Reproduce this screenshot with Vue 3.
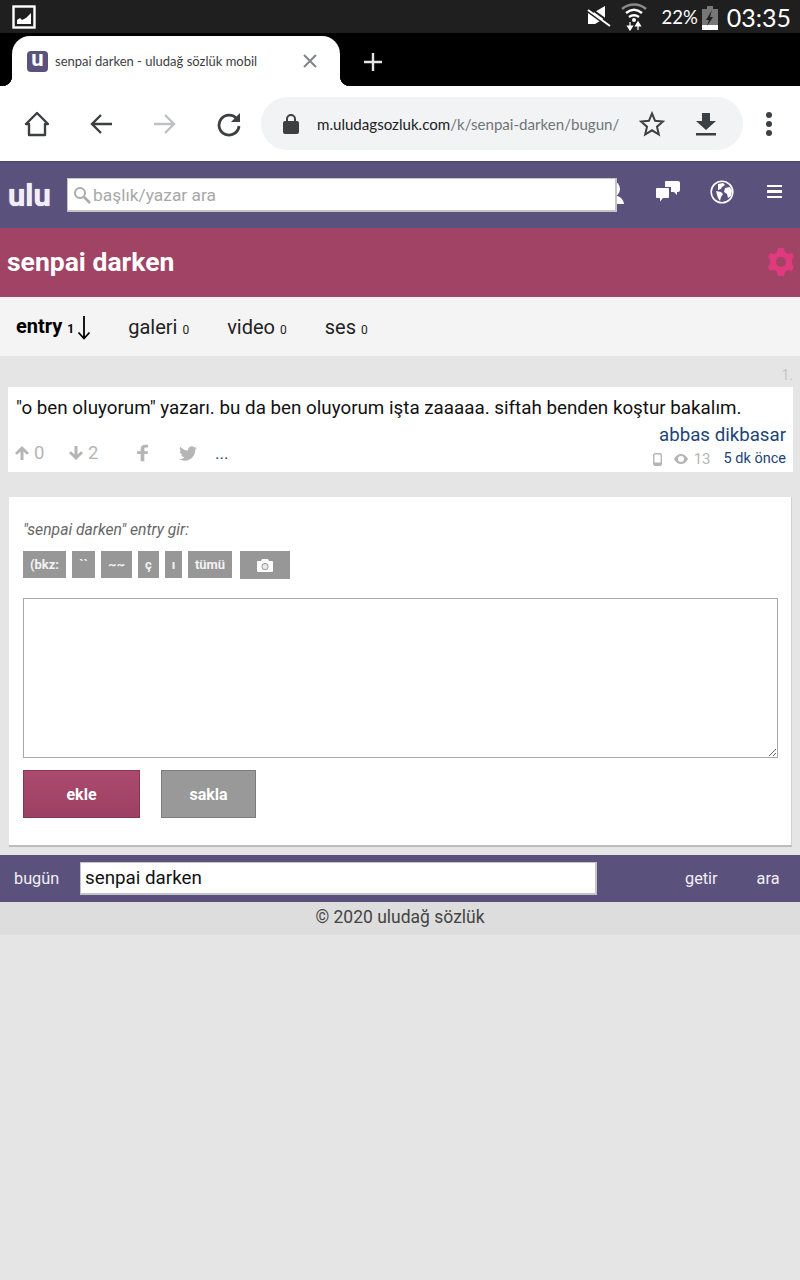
<template>
  <div class="page">
    <!-- android status bar -->
    <div class="status-bar">
      <svg class="pic-icon" width="24" height="24" viewBox="0 0 24 24">
        <rect x="1.5" y="1.5" width="21" height="21" fill="none" stroke="#fff" stroke-width="2.4" />
        <path d="M5 19v-4l3-2 2 2 4-2 5-5v11z" fill="#fff" />
      </svg>
      <div class="status-right">
        <svg width="24" height="24" viewBox="0 0 24 24">
          <path d="M1 8h5l12-7v12L8 19H1z" fill="#fff" />
          <path d="M0 6l22 16M3 3l22 16" stroke="#1f1f1f" stroke-width="2" />
          <path d="M1 5l22 16" stroke="#fff" stroke-width="2" />
        </svg>
        <svg class="wifi" width="26" height="28" viewBox="0 0 26 28">
          <path d="M1 6c7-6 17-6 24 0" fill="none" stroke="#8a8a8a" stroke-width="2.4" />
          <path d="M5 10c5-4 11-4 16 0M8 14c3-2 7-2 10 0" fill="none" stroke="#fff" stroke-width="2.4" />
          <circle cx="13" cy="17" r="2" fill="#fff" />
          <path d="M9 19v6M6.500 23h5l-2.500 4zM17 27v-6M14.500 23h5L17 19z" stroke="#fff" fill="#fff" stroke-width="1.200" />
        </svg>
        <span class="battery-text">22%</span>
        <svg class="battery" width="16" height="24" viewBox="0 0 16 24">
          <path d="M5 0h6v3h5v17H0V3h5z" fill="#777" />
          <rect y="19" width="16" height="5" fill="#fff" />
          <path d="M10 4L4 14h3l-2 6 6-9H8z" fill="#1f1f1f" />
        </svg>
        <span class="clock">03:35</span>
      </div>
    </div>

    <!-- browser tabs -->
    <div class="tab-strip">
      <div class="tab">
        <span class="favicon">u</span>
        <span class="tab-title">senpai darken - uludağ sözlük mobil</span>
        <svg class="tab-close" width="16" height="16" viewBox="0 0 16 16">
          <path d="M2 2l12 12M14 2L2 14" stroke="#808488" stroke-width="2" />
        </svg>
      </div>
      <svg class="new-tab" width="20" height="20" viewBox="0 0 20 20">
        <path d="M10 1v18M1 10h18" stroke="#e4e4e4" stroke-width="2.400" />
      </svg>
    </div>

    <!-- browser toolbar -->
    <div class="toolbar">
      <div class="nav-icons">
        <svg width="26" height="26" viewBox="0 0 26 26">
          <path d="M2 13L13 2l11 11h-3v11H5V13z" fill="none" stroke="#3c4043" stroke-width="2.400" stroke-linejoin="round" />
        </svg>
        <svg width="26" height="26" viewBox="0 0 26 26">
          <path d="M24 13H4M13 4l-9 9 9 9" fill="none" stroke="#3c4043" stroke-width="2.400" />
        </svg>
        <svg width="26" height="26" viewBox="0 0 26 26">
          <path d="M2 13h20M13 4l9 9-9 9" fill="none" stroke="#bdc1c6" stroke-width="2.400" />
        </svg>
        <svg width="26" height="26" viewBox="0 0 26 26">
          <path d="M21 8a10 10 0 1 0 2 7" fill="none" stroke="#3c4043" stroke-width="2.800" />
          <path d="M24 2v9h-9z" fill="#3c4043" />
        </svg>
      </div>
      <div class="address">
        <svg width="16" height="20" viewBox="0 0 16 20">
          <path d="M4 8V5a4 4 0 0 1 8 0v3" fill="none" stroke="#3c4043" stroke-width="2" />
          <rect y="7" width="16" height="13" rx="2" fill="#3c4043" />
        </svg>
        <span class="url"><b>m.uludagsozluk.com</b>/k/senpai-darken/bugun/</span>
        <svg class="star" width="26" height="26" viewBox="0 0 26 26">
          <path d="M13 2.500l3.100 7.300 7.900.7-6 5.200 1.800 7.800L13 19.300l-6.800 4.200L8 15.700l-6-5.200 7.900-.7z" fill="none" stroke="#3c4043" stroke-width="2" />
        </svg>
        <svg class="dl" width="22" height="24" viewBox="0 0 22 24">
          <path d="M7 1h8v8h6L11 18 1 9h6zM1 21h20v2.400H1z" fill="#3c4043" />
        </svg>
      </div>
      <div class="menu-dots"><i></i><i></i><i></i></div>
    </div>

    <!-- site header -->
    <header class="site-head">
      <span class="logo">ulu</span>
      <div class="search-box">
        <svg width="18" height="18" viewBox="0 0 18 18">
          <circle cx="7" cy="7" r="5" fill="none" stroke="#aaa" stroke-width="2" />
          <path d="M11 11l6 6" stroke="#aaa" stroke-width="2.600" />
        </svg>
        <span>başlık/yazar ara</span>
      </div>
      <svg class="user-icon" width="24" height="24" viewBox="0 0 24 24">
        <circle cx="12" cy="9" r="8" fill="#fff" />
        <path d="M0 24c1-7 7-9 12-9s11 2 12 9z" fill="#fff" />
      </svg>
      <svg class="chat-icon" width="24" height="22" viewBox="0 0 24 22">
        <path d="M9 1a1 1 0 0 1 1-1h12a2 2 0 0 1 2 2v7a2 2 0 0 1-2 2h-1v3l-3-3h-3V6H9z" fill="#fff" />
        <path d="M1 7h11a1 1 0 0 1 1 1v8a1 1 0 0 1-1 1H7l-3 3.500V17H1a1 1 0 0 1-1-1V8a1 1 0 0 1 1-1z" fill="#fff" />
      </svg>
      <svg class="globe-icon" width="24" height="24" viewBox="0 0 24 24">
        <circle cx="12" cy="12" r="10.800" fill="#5b517d" stroke="#fff" stroke-width="1.600" />
        <path d="M8 4l5-1 2 2-3 2-1 2-3 1zM6 11l5 1 2 2-2 3-1 4-2-3-1-3zM15 8l5-1 2 4-1 5-3 2-1-4-3-2z" fill="#fff" />
      </svg>
      <div class="burger"><i></i><i></i><i></i></div>
    </header>

    <div class="title-bar">
      <h1>senpai darken</h1>
      <svg width="26" height="28" viewBox="0 0 26 28">
        <path fill-rule="evenodd" fill="#de3a7d" d="M10 0h6l1 4 3 2 4-1 2 4-2 3v4l2 3-2 4-4-1-3 2-1 4h-6l-1-4-3-2-4 1-2-4 2-3v-4L0 9l2-4 4 1 3-2zM13 9a5 5 0 1 0 0 10 5 5 0 0 0 0-10z" />
      </svg>
    </div>

    <nav class="tabs">
      <a class="active">entry <small>1</small>
        <svg class="arrow" width="14" height="24" viewBox="0 0 14 24">
          <path d="M7 0v22M1.500 16.500L7 22.500l5.500-6" fill="none" stroke="#000" stroke-width="1.800" />
        </svg>
      </a>
      <a>galeri <small>0</small></a>
      <a>video <small>0</small></a>
      <a>ses <small>0</small></a>
    </nav>

    <div class="entry-num">1.</div>
    <article class="entry">
      <p class="entry-text">"o ben oluyorum" yazarı. bu da ben oluyorum işta zaaaaa. siftah benden koştur bakalım.</p>
      <div class="entry-foot">
        <div class="actions">
          <span class="vote">
            <svg width="14" height="14" viewBox="0 0 14 14"><path d="M7 0l7 7-2 1.800-3.500-3.300V14h-3V5.500L2 8.800 0 7z" fill="#b5b5b5" /></svg>
            0
          </span>
          <span class="vote">
            <svg width="14" height="14" viewBox="0 0 14 14"><path d="M7 14L0 7l2-1.800 3.500 3.300V0h3v8.500L12 5.200 14 7z" fill="#b5b5b5" /></svg>
            2
          </span>
          <svg class="fb" width="11" height="18" viewBox="0 0 12 18"><path d="M4 18V10H0V7h4V4.500C4 1.500 6 0 8.500 0H12v3H9.500C8.300 3 8 3.600 8 4.500V7h4l-.5 3H8v8z" fill="#b5b5b5" /></svg>
          <svg class="tw" width="18" height="15" viewBox="0 0 18 15"><path d="M18 2l-2 .6L17.500.5l-2.200.9A3.700 3.700 0 0 0 9 4.500 10.500 10.500 0 0 1 1.300.7 3.700 3.700 0 0 0 2.500 5.500L.8 5c0 1.800 1.300 3.300 3 3.700l-1.700.1c.5 1.500 1.800 2.500 3.400 2.600A7.500 7.500 0 0 1 0 13a10.500 10.500 0 0 0 16.200-9.300c.7-.5 1.300-1 1.800-1.700z" fill="#b5b5b5" /></svg>
          <span class="more">...</span>
        </div>
        <div class="meta">
          <a class="author">abbas dikbasar</a>
          <div class="stats">
            <svg width="9" height="13" viewBox="0 0 9 13"><rect x=".7" y=".7" width="7.600" height="11.600" rx="1.500" fill="none" stroke="#b5b5b5" stroke-width="1.400" /><rect x="1" y="9.500" width="7" height="3" fill="#b5b5b5" /></svg>
            <svg class="eye" width="14" height="10" viewBox="0 0 14 10"><path fill-rule="evenodd" d="M7 0c3 0 5.500 2 7 5-1.500 3-4 5-7 5S1.500 8 0 5c1.500-3 4-5 7-5zm0 2a3 3 0 1 0 0 6 3 3 0 0 0 0-6z" fill="#b5b5b5" /></svg>
            <span class="views">13</span>
            <a class="ago">5 dk önce</a>
          </div>
        </div>
      </div>
    </article>

    <section class="form-card">
      <div class="form-label">"senpai darken" entry gir:</div>
      <div class="tools">
        <button v-for="t in tools" :key="t">{{ t }}</button>
        <button class="cam">
          <svg width="16" height="13" viewBox="0 0 16 13">
            <path fill-rule="evenodd" d="M1 2h3l1-2h6l1 2h3a1 1 0 0 1 1 1v9a1 1 0 0 1-1 1H1a1 1 0 0 1-1-1V3a1 1 0 0 1 1-1zm7 2a3.500 3.500 0 1 0 0 7 3.500 3.500 0 0 0 0-7z" fill="#fff" />
            <circle cx="8" cy="7.500" r="2.600" fill="#e8e8e8" />
          </svg>
        </button>
      </div>
      <textarea class="editor"></textarea>
      <div class="form-btns">
        <button class="btn-add">ekle</button>
        <button class="btn-save">sakla</button>
      </div>
    </section>

    <div class="bottom-bar">
      <span class="today">bugün</span>
      <div class="bottom-input">senpai darken</div>
      <a class="get">getir</a>
      <a class="find">ara</a>
    </div>
    <footer class="copy">© 2020 uludağ sözlük</footer>
  </div>
</template>

<script setup>
const tools = ['(bkz:', '``', '~~', 'ç', 'ı', 'tümü']
</script>

<style>
html, body { margin: 0; background: #e5e5e5; }
</style>

<style scoped>
.page { width: 800px; min-height: 1280px; background: #e5e5e5; font-family: Roboto, "Liberation Sans", sans-serif; }

.status-bar { height: 33px; background: #1f1f1f; display: flex; align-items: center; justify-content: space-between; padding: 0 9px 0 12px; }
.pic-icon { display: block; }
.status-right { display: flex; align-items: center; }
.wifi { margin-left: 10px; margin-top: 1px; }
.battery-text { color: #fff; font: 18.500px Lato, sans-serif; margin-left: 14px; }
.battery { margin-left: 4px; margin-top: 2px; }
.clock { color: #fff; font: 25px Lato, sans-serif; margin-left: 9px; }

.tab-strip { height: 53px; background: #000; display: flex; align-items: flex-end; padding-left: 12px; }
.tab { width: 328px; height: 50px; box-sizing: border-box; background: #fff; border-radius: 18px 18px 0 0; display: flex; align-items: center; padding: 0 22px 0 15px; position: relative; }
.tab::before, .tab::after { content: ""; position: absolute; bottom: 0; width: 10px; height: 10px; }
.tab::before { left: -10px; background: radial-gradient(circle at 0 0, #000 10px, #fff 10.500px); }
.tab::after { right: -10px; background: radial-gradient(circle at 100% 0, #000 10px, #fff 10.500px); }
.favicon { width: 21px; height: 21px; border-radius: 4px; background: #5b517d; color: #fff; font: bold 22px/16px Roboto, sans-serif; text-align: center; flex-shrink: 0; }
.tab-title { font: 13px Lato, sans-serif; color: #3c4043; margin-left: 7px; flex: 1; white-space: nowrap; }
.new-tab { margin-left: 23px; margin-bottom: 14px; }

.toolbar { height: 75px; background: #fff; display: flex; align-items: center; }
.nav-icons { display: flex; gap: 38px; padding-left: 24px; flex-shrink: 0; }
.address { width: 482px; height: 53px; margin-left: 19px; flex-shrink: 0; background: #f1f3f4; border-radius: 27px; display: flex; align-items: center; padding-left: 22px; box-sizing: border-box; }
.url { font: 15.100px Lato, sans-serif; color: #70757a; margin-left: 18px; width: 304px; white-space: nowrap; overflow: hidden; flex-shrink: 0; }
.url b { color: #202124; font-weight: 400; }
.star { margin-left: 18px; flex-shrink: 0; }
.dl { margin-left: 30px; flex-shrink: 0; }
.menu-dots { display: flex; flex-direction: column; gap: 3px; margin-left: 23px; }
.menu-dots i { width: 6px; height: 6px; border-radius: 50%; background: #3c4043; display: block; }

.site-head { height: 67px; background: #5b517d; border-top: 2px solid #544a73; box-sizing: border-box; display: flex; align-items: center; padding-left: 8px; }
.logo { width: 59px; flex-shrink: 0; color: #f1eff6; font: bold 31px Roboto, sans-serif; text-shadow: 0 0 1px #f1eff6; }
.search-box { width: 550px; height: 34px; margin-top: -1px; box-sizing: border-box; background: #fff; border: 1px solid #c4c4c4; border-width: 1px 2px 2px 1px; display: flex; align-items: center; gap: 2px; padding-left: 5px; color: #a8a8a8; font-size: 17.400px; position: relative; z-index: 1; }
.user-icon { margin-left: -17px; margin-top: -8px; }
.chat-icon { margin-left: 32px; margin-top: -8px; }
.globe-icon { margin-left: 30px; margin-top: -8px; }
.burger { display: flex; flex-direction: column; gap: 3px; margin-left: 33px; margin-top: -8px; }
.burger i { display: block; width: 15px; height: 2.500px; background: #fff; }

.title-bar { height: 69px; background: #a04365; display: flex; align-items: center; justify-content: space-between; padding: 0 6px 2px 7px; box-sizing: border-box; }
.title-bar h1 { margin: 0; font-size: 26.500px; font-weight: 700; color: #fff; }
.title-bar svg { margin-top: 1px; }

.tabs { height: 59px; background: #f4f4f4; display: flex; align-items: center; padding-left: 16px; gap: 38px; font-size: 20px; color: #222; }
.tabs a { white-space: nowrap; }
.tabs a.active { font-weight: 700; color: #000; margin-right: -1px; }
.tabs small { font-size: 12px; font-weight: 400; }
.tabs .active small { font-weight: 700; }
.arrow { vertical-align: -7px; margin-left: 3px; }

.entry-num { height: 31px; box-sizing: border-box; text-align: right; padding: 11px 7px 0 0; color: #c4c4c4; font-size: 14px; }
.entry { margin: 0 7px 0 8px; height: 85px; background: #fff; box-sizing: border-box; padding: 10px 7px 0 8px; }
.entry-text { margin: 0; font-size: 18.800px; line-height: 22px; color: #111; white-space: nowrap; }
.entry-foot { display: flex; justify-content: space-between; align-items: flex-end; margin-top: 5px; }
.actions { display: flex; align-items: center; color: #b5b5b5; font-size: 18.500px; padding-bottom: 5px; margin-left: -1px; }
.vote { display: flex; align-items: center; gap: 5px; width: 54px; }
.fb { margin-left: 14px; }
.tw { margin-left: 31px; }
.more { margin-left: 18px; color: #2b4a75; font-size: 17px; }
.meta { text-align: right; }
.author { display: block; font-size: 18.700px; line-height: 22px; color: #1d4477; }
.stats { display: flex; align-items: center; justify-content: flex-end; font-size: 14px; margin-top: 3px; line-height: 20px; }
.eye { margin-left: 12px; }
.views { color: #b5b5b5; margin-left: 6px; font-size: 15px; }
.ago { color: #1d4477; margin-left: 13px; font-size: 14.500px; }

.form-card { margin: 25px 8px 0 9px; height: 350px; background: #fff; border-bottom: 2px solid #bbb; border-right: 1px solid #d2d2d2; box-sizing: border-box; padding: 23px 14px 0; }
.form-label { font-size: 15.700px; font-style: italic; color: #666; line-height: 20px; }
.tools { display: flex; align-items: flex-start; gap: 6px; margin-top: 11px; }
.tools button { height: 27px; padding: 0; border: 0; background: #979797; color: #f2f2f2; font: bold 13px Roboto, sans-serif; }
.tools button:nth-child(1) { width: 43px; }
.tools button:nth-child(2) { width: 23px; }
.tools button:nth-child(3) { width: 31px; }
.tools button:nth-child(4) { width: 21px; }
.tools button:nth-child(5) { width: 17px; }
.tools button:nth-child(6) { width: 44px; }
.tools .cam { width: 50px; height: 28px; margin-left: 2px; }
.tools .cam svg { display: block; margin: 0 auto; }
.editor { display: block; width: 755px; height: 160px; box-sizing: border-box; margin: 19px 0 0; border: 1px solid #a9a9a9; background: #fff; }
.form-btns { display: flex; gap: 21px; margin-top: 12px; }
.form-btns button { height: 48px; font: bold 16px Roboto, sans-serif; color: #fff; box-sizing: border-box; }
.btn-add { width: 117px; background: linear-gradient(#ab4a6e, #9c4163); border: 1px solid #863654; }
.btn-save { width: 95px; background: #999; border: 1px solid #7c7c7c; }

.bottom-bar { margin-top: 8px; height: 47px; background: #5b517d; display: flex; align-items: center; color: #f1eff6; font-size: 16.300px; }
.today { width: 80px; padding-left: 14px; box-sizing: border-box; }
.bottom-input { width: 517px; height: 33px; box-sizing: border-box; background: #fff; border: 1px solid #c4c4c4; border-width: 1px 2px 2px 1px; padding-left: 4px; color: #111; font-size: 18.800px; line-height: 31px; }
.get { margin-left: 88px; }
.find { margin-left: 39px; }

.copy { height: 33px; background: #ddd; text-align: center; color: #444; font-size: 17.500px; line-height: 30px; }
</style>
